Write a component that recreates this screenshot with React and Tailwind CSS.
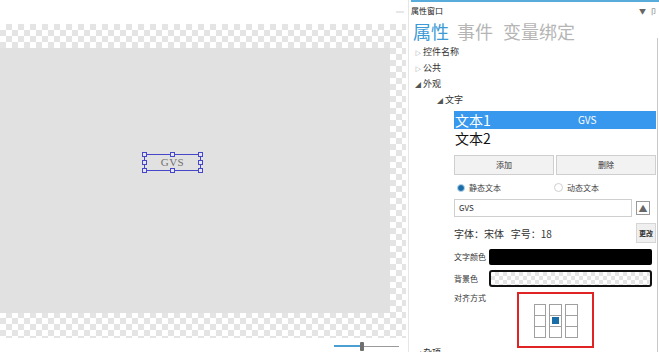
import React from "react";

const font = { fontFamily: '"Noto Sans CJK SC", "Noto Sans", sans-serif' };

function Handle({ className }) {
  return (
    <div
      className={
        "absolute w-[5px] h-[5px] border border-[#4646c8] bg-[#e6e6f0] " +
        className
      }
    />
  );
}

function TreeRow({ open, label, indent }) {
  return (
    <div className={"shrink-0 flex items-center h-[16px] text-[9px] text-[#333] " + indent}>
      <span className="w-[8px] text-[6px] text-[#555]">{open ? "◢" : "▷"}</span>
      <span>{label}</span>
    </div>
  );
}

function AlignGrid() {
  const cells = [0, 1, 2, 3, 4, 5, 6, 7, 8];
  return (
    <div className="grid grid-cols-3 gap-x-[3px] w-[44px]">
      {cells.map((c) => (
        <div
          key={c}
          className={
            "h-[12px] border border-[#a0a0a0] flex items-center justify-center bg-white " +
            (c > 2 ? "-mt-px" : "")
          }
        >
          {c === 4 && <div className="w-[7px] h-[7px] bg-[#1a6ea8]" />}
        </div>
      ))}
    </div>
  );
}

export default function App() {
  return (
    <div className="flex w-[659px] h-[352px] bg-white overflow-hidden" style={font}>
      {/* design canvas */}
      <div className="relative w-[408px] h-full flex flex-col shrink-0">
        <div className="absolute right-[4px] top-[8px] text-[8px] leading-none text-[#aaa]">═</div>
        <div className="shrink-0 mt-[24px] w-[406px] h-[314px] bg-[repeating-conic-gradient(#e4e4e4_0_25%,#ffffff_0_50%)] bg-[length:12px_12px] pt-[24px]">
          <div className="relative w-[390px] h-[265px] bg-[#e1e1e1]">
            <div className="absolute left-[144px] top-[106px] w-[57px] h-[17px] border border-[#4646c8] flex items-center justify-center">
              <span
                className="text-[11px] font-normal text-[#707070] leading-none tracking-[0.5px]"
                style={{ fontFamily: '"Liberation Serif", "DejaVu Serif", serif' }}
              >
                GVS
              </span>
              <Handle className="-left-[3px] -top-[3px]" />
              <Handle className="left-[25px] -top-[3px]" />
              <Handle className="-right-[3px] -top-[3px]" />
              <Handle className="-left-[3px] top-[5px]" />
              <Handle className="-right-[3px] top-[5px]" />
              <Handle className="-left-[3px] -bottom-[3px]" />
              <Handle className="left-[25px] -bottom-[3px]" />
              <Handle className="-right-[3px] -bottom-[3px]" />
            </div>
          </div>
        </div>
        <div className="shrink-0 flex justify-end items-center pr-[9px] mt-[3px] h-[10px]">
          <div className="w-[26px] h-[2px] bg-[#4a9fd0]" />
          <div className="w-[4px] h-[9px] rounded-[1px] bg-[#707070]" />
          <div className="w-[35px] h-px bg-[#9a9a9a]" />
        </div>
      </div>

      {/* property panel */}
      <div className="w-[251px] h-full border-l border-[#e6e6e6] flex flex-col relative overflow-hidden">
        <div className="shrink-0 h-[2px] bg-[#58acdc] ml-[2px]" />
        <div className="shrink-0 flex items-center justify-between h-[14px] pl-[2px] pr-[2px] mt-[2px]">
          <span className="text-[8px] text-[#222] leading-none">属性窗口</span>
          <span className="text-[7px] text-[#666] leading-none flex gap-[4px]">
            <span>▼</span>
            <span>卩</span>
          </span>
        </div>
        <div className="shrink-0 flex items-center h-[26px] pl-[4px] text-[18px] leading-none gap-[8px]">
          <span className="text-[#3c9ad6]">属性</span>
          <span className="text-[#b5b5b5]">事件</span>
          <span className="text-[#b5b5b5] ml-[2px]">变量绑定</span>
        </div>
        <div className="absolute right-[1px] top-[38px] bottom-0 w-px bg-[#c8c8c8]" />

        <div className="shrink-0 mt-[0px] flex flex-col">
          <TreeRow label="控件名称" indent="pl-[6px]" />
          <TreeRow label="公共" indent="pl-[6px]" />
          <TreeRow open label="外观" indent="pl-[6px]" />
          <TreeRow open label="文字" indent="pl-[28px]" />
        </div>

        <div className="shrink-0 pl-[45px] pr-[3px] flex flex-col">
          <div className="shrink-0 mt-[3px] h-[18px] bg-[#3898ee] flex items-center text-white">
            <span className="w-[124px] pl-[1px] text-[14px] leading-none">文本1</span>
            <span className="text-[10px] leading-none">GVS</span>
          </div>
          <div className="shrink-0 h-[18px] flex items-center text-[14px] leading-none text-[#111] pl-[1px]">
            文本2
          </div>

          <div className="shrink-0 mt-[8px] flex gap-[2px] h-[20px]">
            <div className="flex-1 border border-[#cfcfcf] bg-[#f2f2f2] flex items-center justify-center text-[8px] text-[#333]">
              添加
            </div>
            <div className="flex-1 border border-[#cfcfcf] bg-[#f2f2f2] flex items-center justify-center text-[8px] text-[#333]">
              删除
            </div>
          </div>

          <div className="shrink-0 mt-[6px] h-[13px] flex items-center text-[8px] text-[#444]">
            <div className="w-[100px] flex items-center pl-[3px]">
              <div className="w-[8px] h-[8px] rounded-full bg-[#1a6ea8] border-[1.5px] border-[#b8d6ec] mr-[4px]" />
              <span>静态文本</span>
            </div>
            <div className="flex items-center">
              <div className="w-[9px] h-[9px] rounded-full border border-[#d0d0d0] bg-white mr-[4px]" />
              <span>动态文本</span>
            </div>
          </div>

          <div className="shrink-0 mt-[5px] flex items-center h-[18px]">
            <div className="w-[178px] h-[18px] border border-[#cfcfcf] flex items-center pl-[4px] text-[8px] text-[#333]">
              GVS
            </div>
            <div className="ml-[4px] w-[14px] h-[14px] border border-[#9a9a9a] flex items-center justify-center text-[9px] text-[#666] leading-none">
              ▲
            </div>
          </div>

          <div className="shrink-0 mt-[6px] h-[20px] flex items-center justify-between">
            <span className="text-[10px] text-[#333]">字体：宋体&nbsp;&nbsp;&nbsp;字号：18</span>
            <div className="w-[20px] h-[20px] border border-[#d6d6d6] bg-[#efefef] flex items-center justify-center text-[7px] font-bold text-[#333]">
              更改
            </div>
          </div>

          <div className="shrink-0 mt-[6px] flex items-center h-[16px]">
            <span className="w-[35px] text-[8px] text-[#333]">文字颜色</span>
            <div className="w-[163px] h-[16px] bg-black rounded-[2px]" />
          </div>

          <div className="shrink-0 mt-[5px] flex items-center h-[17px]">
            <span className="w-[35px] text-[8px] text-[#333]">背景色</span>
            <div className="w-[163px] h-[17px] rounded-[3px] border-2 border-[#111] bg-[repeating-conic-gradient(#e4e4e4_0_25%,#ffffff_0_50%)] bg-[length:8px_8px]" />
          </div>

          <div className="shrink-0 mt-[5px] flex">
            <span className="w-[63px] text-[8px] text-[#333] leading-[12px]">对齐方式</span>
            <div className="w-[77px] h-[56px] border-2 border-[#e02424] flex items-center justify-center pt-[1px]">
              <AlignGrid />
            </div>
          </div>
        </div>

        <div className="shrink-0 mt-[-3px]">
          <TreeRow open label="杂项" indent="pl-[6px]" />
        </div>
      </div>
    </div>
  );
}
